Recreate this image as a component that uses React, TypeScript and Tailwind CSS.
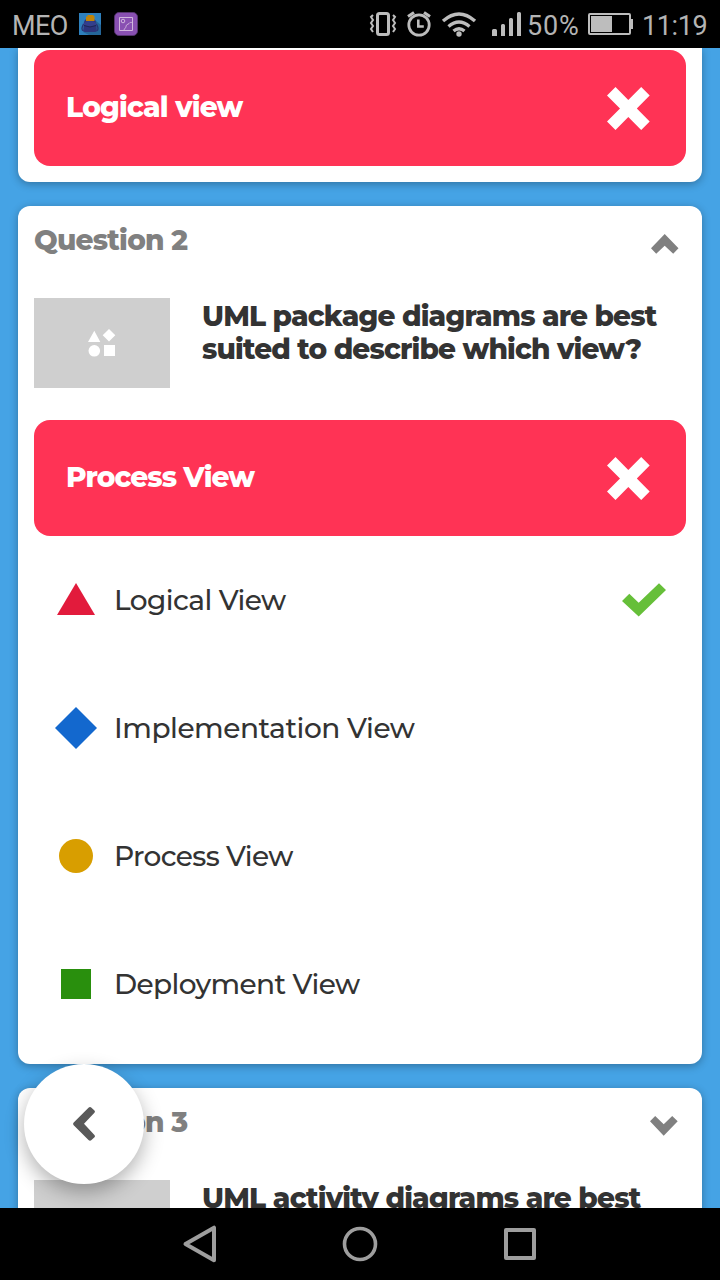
import type { ReactNode } from "react";

function Cross() {
  return (
    <svg width="43" height="43" viewBox="0 0 43 43" fill="#fff">
      <path d="M8.500 0 0 8.500 13 21.500 0 34.500 8.500 43 21.300 30 34.200 43 42.700 34.500 29.800 21.500 42.700 8.500 34.200 0 21.300 12.900Z" />
    </svg>
  );
}

function Check() {
  return (
    <svg className="mr-5 mt-[-1px]" width="44" height="34" viewBox="0 0 44 34" fill="#66bf39">
      <path d="M0 18 7.300 10.700 16.700 19.800 37 .2 44 7 16.700 33.600Z" />
    </svg>
  );
}

function StatusBar() {
  return (
    <header className="flex h-12 shrink-0 items-center bg-black text-[#b4b4b4]">
      <span className="ml-3 mt-[5px] w-[58px] whitespace-nowrap text-[27px] leading-none tracking-[-0.6px]">MEO</span>
      <svg className="ml-[9px]" width="22" height="22" viewBox="0 0 22 22">
        <rect width="22" height="22" fill="#2e80bd" />
        <path d="M16 7 22 12v10H10L4 19Z" fill="#246699" />
        <path d="M4.500 11Q1.500 17 4.500 18M17.500 11Q20.500 17 17.500 18" fill="none" stroke="#283272" strokeWidth="1.300" />
        <path d="M5 9.500Q5.500 6 8 6h6q2.500 0 3 3.500l.8 8q-.3 1.500-2 1.500h-9.600q-1.700 0-2-1.500Z" fill="#2d357c" />
        <path d="M4.500 10Q11 5.500 17.500 10L17 12Q11 15 5 12Z" fill="#343f8b" />
        <path d="M5 12.500q6 3 12 0" fill="none" stroke="#1d2455" />
        <path d="M7 3.500h1.500V2h6v1h1v5H7Z" fill="#c18408" />
      </svg>
      <svg className="ml-[13px]" width="24" height="24" viewBox="0 0 24 24" fill="none" stroke="#d0b6dd">
        <rect x=".5" y=".5" width="23" height="23" rx="4.500" fill="#8950b2" stroke="#55346e" />
        <path d="M5.500 5.500h13v13h-13zM10 18.500c0-2 2-2.500 2-4 0-2 2-2 3-3 1-1.500 2-1 3.500-1" />
        <circle cx="9" cy="9" r="1.800" />
      </svg>
      <svg className="ml-auto mr-[3px]" width="156" height="28" viewBox="368 10 156 28" fill="none" stroke="#bdbdbd">
        <rect x="377.500" y="13.500" width="11" height="21" rx="2" strokeWidth="3" />
        <path d="m373 15-2 2 2 3-2 3 2 3-2 3 2 3M393 15l2 2-2 3 2 3-2 3 2 3-2 3" strokeWidth="2" />
        <circle cx="419" cy="25" r="10.200" strokeWidth="2.800" />
        <path d="M418.300 19.500v7h5.500" strokeWidth="2.600" />
        <path d="m408 16.500 6-4M430 16.500l-6-4" strokeWidth="3" />
        <path d="M443 21q16-14 32 0M448.500 26.500q10.500-9 21 0M453.500 31q5.500-4.500 11 0" strokeWidth="3.400" />
        <circle cx="459" cy="34" r="2.700" fill="#bdbdbd" stroke="none" />
        <path d="M492 30.500q0-1.500 1.500-1.500h2q1.500 0 1.500 1.500V36h-5zM501 25.500q0-1.500 1.500-1.500h1q1.500 0 1.500 1.500V36h-4zM509 19.500q0-1.500 1.500-1.500h1q1.500 0 1.500 1.500V36h-4zM517 13.500q0-1.500 1.500-1.500h1q1.500 0 1.500 1.500V36h-4z" fill="#bdbdbd" stroke="none" />
      </svg>
      <span className="mt-[5px] w-[61px] whitespace-nowrap text-[27px] leading-none tracking-[0.8px]">50%</span>
      <svg width="46" height="22" viewBox="0 0 46 22" fill="none" stroke="#bdbdbd">
        <rect x="1" y="1" width="41" height="20" rx="1" strokeWidth="2" />
        <path d="M3 3h21v16H3zM42 6h3v10h-3z" fill="#bdbdbd" stroke="none" />
      </svg>
      <span className="ml-2 mr-3 mt-[5px] w-[66px] whitespace-nowrap text-[27px] leading-none tracking-[-0.4px]">11:19</span>
    </header>
  );
}

function WrongAnswer({ children }: { children: ReactNode }) {
  return (
    <div className="mx-4 flex h-[116px] items-center justify-between rounded-2xl bg-[#ff3355] pl-8 pr-9 font-extrabold text-white">
      <div className="-mt-px">{children}</div>
      <Cross />
    </div>
  );
}

function Thumbnail() {
  return (
    <div className="flex h-[90px] w-[136px] shrink-0 items-center justify-center bg-[#cfcfcf]">
      <svg width="28" height="28" viewBox="0 0 28 28" fill="#fff">
        <path d="M6.300 1.700 12.300 13H0ZM21 0l6.300 6.200L21 12.400l-6.300-6.200ZM16 16h11v11H16Z" />
        <circle cx="6.300" cy="21.800" r="5.800" />
      </svg>
    </div>
  );
}

function CardTitle({ children, open }: { children: ReactNode; open: boolean }) {
  return (
    <div className="flex h-[92px] items-start justify-between pl-4 pr-6 pt-[18px] font-extrabold tracking-[-0.75px] text-[#808080]">
      {children}
      {open ? (
        <svg className="mr-[-1px] mt-[10px]" width="28" height="20" viewBox="0 0 28 20" fill="#808080">
          <path d="M13.700 0 27.500 14.300 22.200 19.700 13.700 11.700 5.200 19.700 0 14.300Z" />
        </svg>
      ) : (
        <svg className="mt-[10px]" width="28" height="20" viewBox="0 0 28 20" fill="#808080">
          <path d="M0 5.300 5.200 0 13.700 8.300 22.200 0 27.700 5.300 13.700 19.700Z" />
        </svg>
      )}
    </div>
  );
}

function Option({ shape, children, correct }: { shape: ReactNode; children: ReactNode; correct?: boolean }) {
  return (
    <div className="flex h-32 items-center pl-9 font-medium text-[#333]">
      <svg className="mr-4 shrink-0" width="44" height="44" viewBox="0 0 44 44">{shape}</svg>
      <div className="flex-1">{children}</div>
      {correct && <div className="mr-4"><Check /></div>}
    </div>
  );
}

const card = "shrink-0 bg-white shadow-[0_2px_8px_rgba(0,0,0,0.3)]";

export default function App() {
  return (
    <div className="relative flex h-[1280px] w-[720px] flex-col overflow-hidden bg-[#45a3e5] font-['Roboto',sans-serif]">
      <StatusBar />
      <main className="flex min-h-0 flex-1 flex-col gap-6 overflow-hidden px-[18px] font-['Montserrat','Inter',sans-serif] text-[28px] leading-[33px]">
        <section className={`${card} h-[134px] rounded-b-xl pt-0.5`}>
          <WrongAnswer><span className="tracking-[-0.8px]">Logical view</span></WrongAnswer>
        </section>
        <section className={`${card} h-[858px] rounded-xl`}>
          <CardTitle open><span>Question 2</span></CardTitle>
          <div className="flex h-[122px] px-4">
            <Thumbnail />
            <div className="ml-8 mt-[2px] whitespace-nowrap font-extrabold tracking-[-0.84px] text-[#333]">
              <div>UML package diagrams are best</div>
              <div>suited to describe which view?</div>
            </div>
          </div>
          <WrongAnswer><span className="tracking-[-0.95px]">Process View</span></WrongAnswer>
          <Option correct shape={<path d="M22 5 41 37H3Z" fill="#e21b3c" />}><span className="tracking-[-0.6px]">Logical View</span></Option>
          <Option shape={<path d="m22 1 21 21-21 21L1 22Z" fill="#1368ce" />}><span className="tracking-[-0.45px]">Implementation View</span></Option>
          <Option shape={<circle cx="22" cy="22" r="17" fill="#d89e00" />}><span className="tracking-[-0.65px]">Process View</span></Option>
          <Option shape={<path d="M7 7h30v30H7Z" fill="#298f0d" />}><span className="tracking-[-0.6px]">Deployment View</span></Option>
        </section>
        <section className={`${card} h-[300px] rounded-xl`}>
          <CardTitle open={false}><span>Question 3</span></CardTitle>
          <div className="flex px-4">
            <Thumbnail />
            <div className="ml-8 mt-[2px] whitespace-nowrap font-extrabold tracking-[-0.81px] text-[#333]">UML activity diagrams are best</div>
          </div>
        </section>
      </main>
      <button aria-label="Back" className="absolute left-6 top-[1064px] flex size-[120px] items-center justify-center rounded-full bg-white shadow-[0_8px_20px_rgba(0,0,0,0.3)]">
        <svg width="22" height="34" viewBox="0 0 22 34" fill="#595959">
          <path d="M15.500.7q1.500-1.400 3 0l2.700 2.500q1.500 1.300 0 2.800L11 16.800 21.200 27.700q1.500 1.500 0 2.800l-2.700 2.600q-1.500 1.400-3 0L.7 18.200q-1.200-1.400 0-2.800Z" />
        </svg>
      </button>
      <nav className="z-10 flex h-[72px] shrink-0 items-center justify-center gap-[120px] bg-black">
        <svg width="40" height="40" viewBox="0 0 40 40" fill="none" stroke="#9e9e9e" strokeWidth="4" strokeLinejoin="round"><path d="M34 3.700v32.600L5.500 20Z" /></svg>
        <svg width="40" height="40" viewBox="0 0 40 40" fill="none" stroke="#9e9e9e" strokeWidth="3.600"><circle cx="20" cy="20" r="15.500" /></svg>
        <svg width="40" height="40" viewBox="0 0 40 40" fill="none" stroke="#9e9e9e" strokeWidth="4" strokeLinejoin="round"><path d="M6 6h28v28H6Z" /></svg>
      </nav>
    </div>
  );
}
